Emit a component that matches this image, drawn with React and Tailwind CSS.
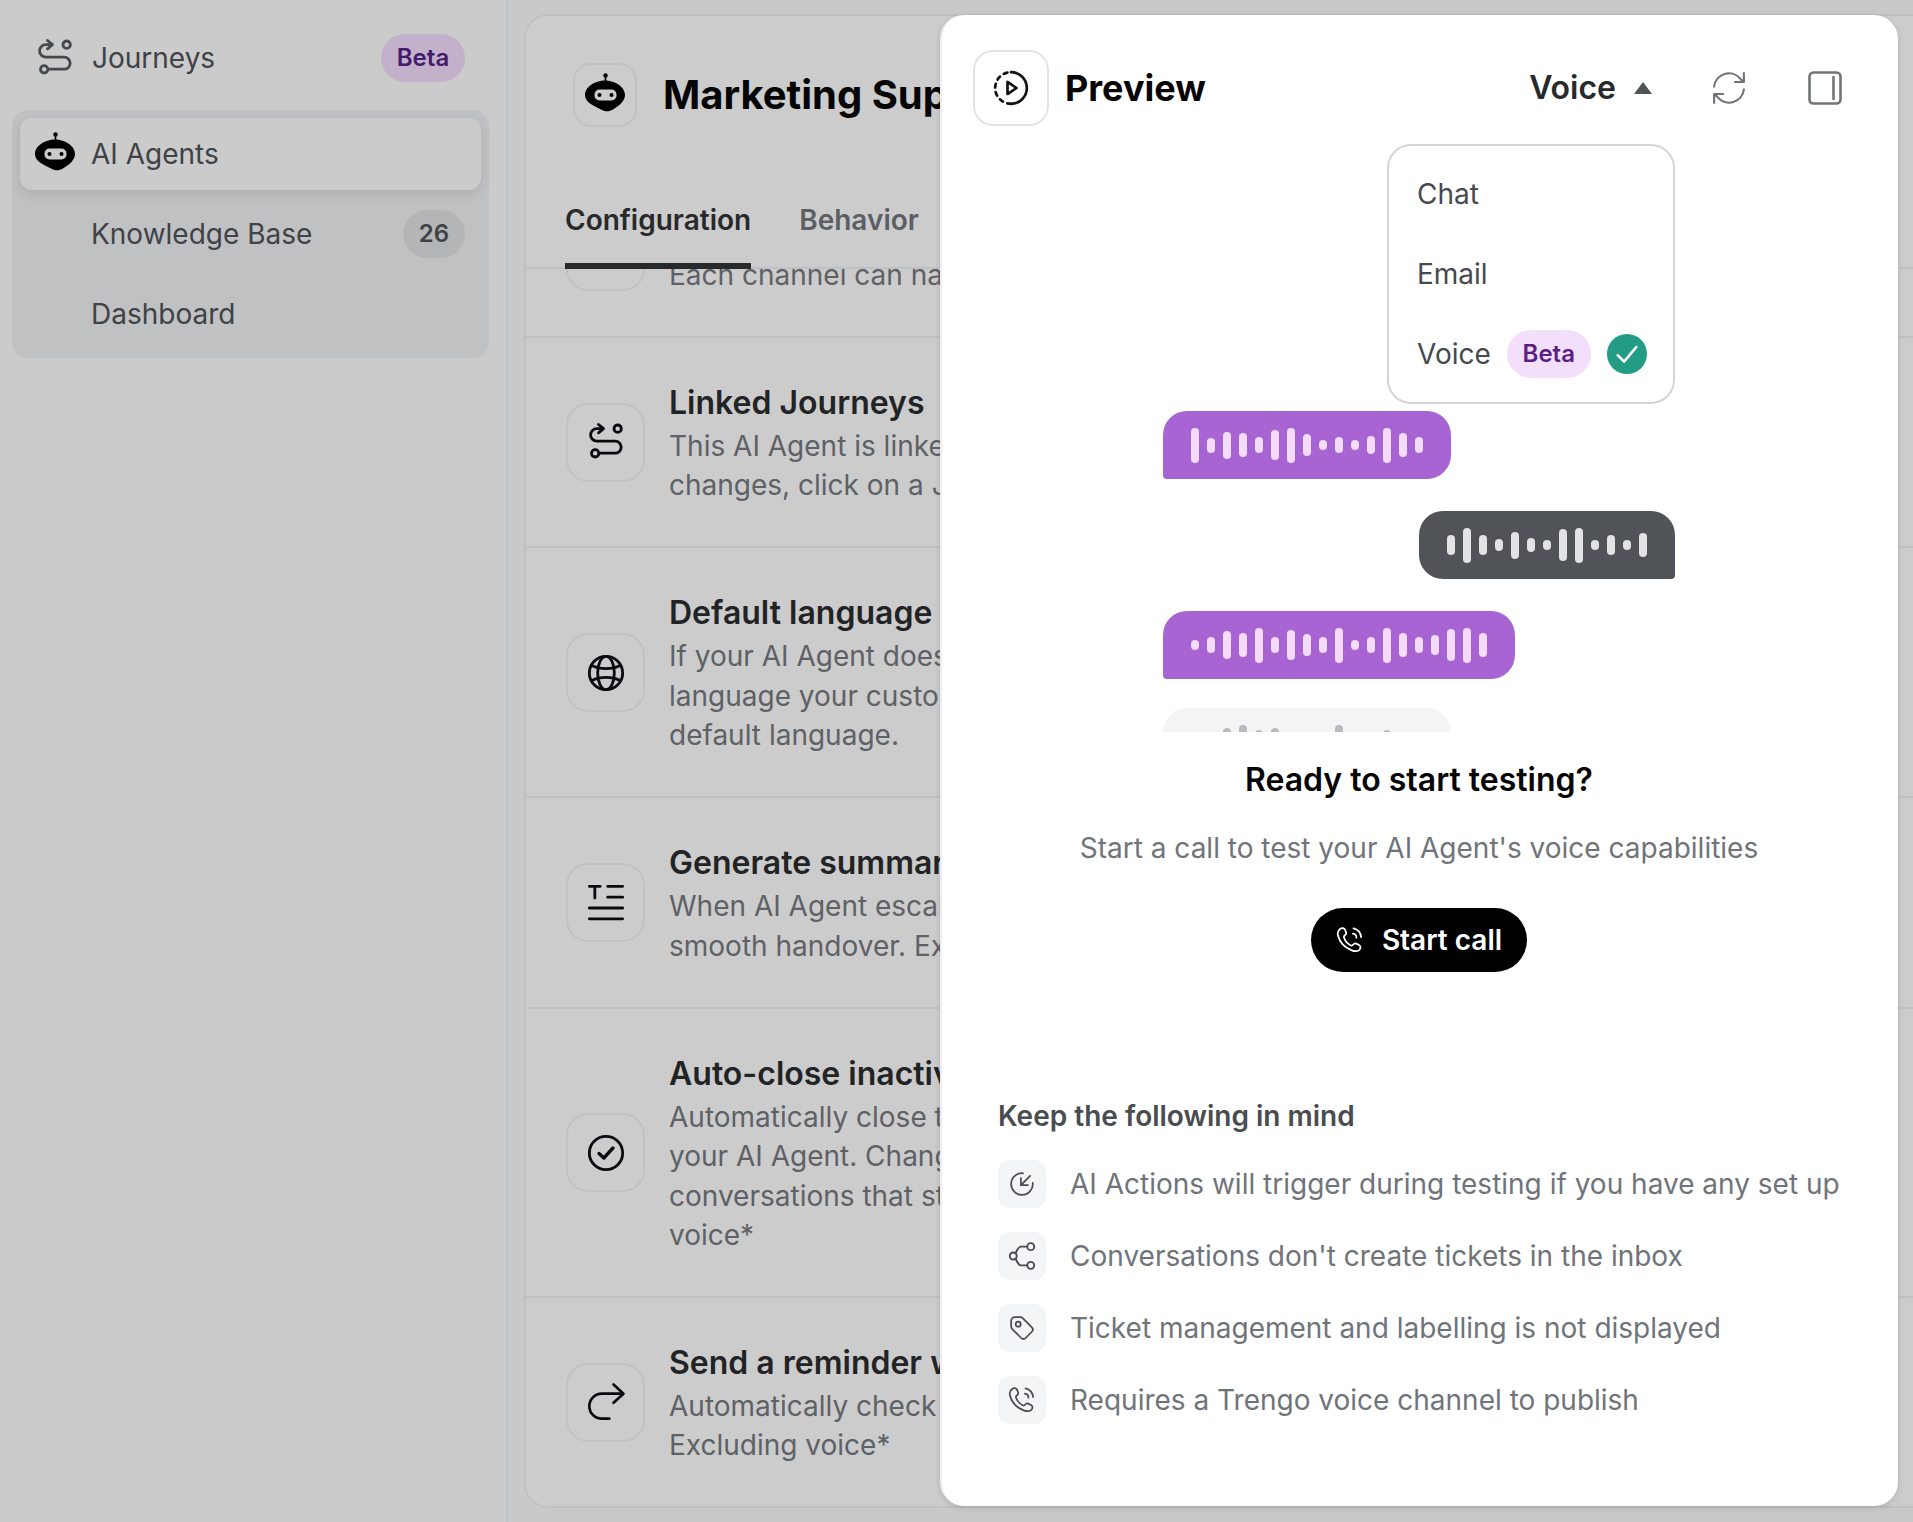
const font = { fontFamily: "Inter, 'Liberation Sans', sans-serif" };

const Robot = ({ className, eye = "#cccccc" }) => (
  <svg viewBox="0 0 40 40" className={className} fill="none">
    <circle cx="20.500" cy="2.500" r="2.200" fill="#000" />
    <path d="M20.500 4v5" stroke="#000" strokeWidth="1.600" />
    <path d="M20 7.500C30 7.500 40 14 40 22c0 6-6 11-12 14.500-4 2.300-8 2.500-12 0C10 33 0 30 0 22 0 14 10 7.500 20 7.500Z" fill="#000" />
    <rect x="9.500" y="16.500" width="22" height="11" rx="5" fill={eye} />
    <circle cx="14.500" cy="22" r="2" fill="#000" />
    <circle cx="26.500" cy="22" r="2" fill="#000" />
  </svg>
);

const Route = ({ className }) => (
  <svg viewBox="0 0 24 24" className={className} fill="none" stroke="currentColor" strokeWidth="1.700" strokeLinecap="round" strokeLinejoin="round">
    <path d="M7.500 1.500 10.500 4l-3 2.500" />
    <path d="M10 4H6.500a3.500 3.500 0 0 0 0 7.500h11a3.600 3.600 0 0 1 0 7.200H8.500" />
    <circle cx="19" cy="4" r="2.200" />
    <circle cx="5.500" cy="18.800" r="2.200" />
  </svg>
);

const Globe = ({ className }) => (
  <svg viewBox="0 0 24 24" className={className} fill="none" stroke="currentColor" strokeWidth="1.700">
    <circle cx="12" cy="12" r="10" />
    <ellipse cx="12" cy="12" rx="5" ry="10" />
    <path d="M3.500 7.500c5 2.500 12 2.500 17 0M3.500 16.500c5-2.500 12-2.500 17 0" />
  </svg>
);

const Summary = ({ className }) => (
  <svg viewBox="0 0 24 24" className={className} fill="none" stroke="currentColor" strokeWidth="1.700" strokeLinecap="round">
    <path d="M2 2h6.500M5.300 2v7M13 2h9M13 8.500h9M2 15h20M2 21.500h20" />
  </svg>
);

const CheckCircle = ({ className }) => (
  <svg viewBox="0 0 24 24" className={className} fill="none" stroke="currentColor" strokeWidth="1.700" strokeLinecap="round" strokeLinejoin="round">
    <circle cx="12" cy="12" r="10" />
    <path d="m7.800 12.300 2.900 2.700 5.500-6" strokeWidth="2" />
  </svg>
);

const Reply = ({ className }) => (
  <svg viewBox="0 0 24 24" className={className} fill="none" stroke="currentColor" strokeWidth="1.600" strokeLinecap="round" strokeLinejoin="round">
    <path d="M16.500 1.500 22.500 7l-6 5.500" />
    <path d="M22 7H9.500a7.500 7.500 0 0 0 0 15H14" />
  </svg>
);

const DashedPlay = ({ className }) => (
  <svg viewBox="0 0 24 24" className={className} fill="none" stroke="currentColor" strokeWidth="1.700" strokeLinecap="round" strokeLinejoin="round">
    <path d="M12 2a10 10 0 0 1 0 20" />
    <path d="M12 22a10 10 0 0 1-10-10A10 10 0 0 1 12 2" strokeDasharray="2.400 2.900" />
    <path d="M9.800 8.200v7.600l5.700-3.800Z" />
  </svg>
);

const Refresh = ({ className }) => (
  <svg viewBox="0 0 24 24" className={className} fill="none" stroke="currentColor" strokeWidth="1.500" strokeLinecap="round" strokeLinejoin="round">
    <path d="M1.500 11A10.500 10.500 0 0 1 20 5.500l2 2" />
    <path d="M22.500 1.500v6.300h-6.300" />
    <path d="M22.500 13A10.500 10.500 0 0 1 4 18.500l-2-2" />
    <path d="M1.500 22.500v-6.300h6.300" />
  </svg>
);

const PanelIcon = ({ className }) => (
  <svg viewBox="0 0 34 34" className={className} fill="none" stroke="currentColor" strokeWidth="2.600" strokeLinecap="round">
    <rect x="1.500" y="1.500" width="31" height="31" rx="4" />
    <path d="M25.500 6v22" />
  </svg>
);

const PhoneWaves = ({ className }) => (
  <svg viewBox="0 0 24 24" className={className} fill="none" stroke="currentColor" strokeWidth="1.500" strokeLinecap="round" strokeLinejoin="round">
    <path d="M3.500 2.500c1.700-1.200 3.600-.8 4.300.8l.9 2.300c.3 1-.2 1.800-1.100 2.400-.9.600-1 1.300-.6 2.300 1 2.700 3 5 5.400 6.200 1 .5 1.700.3 2.400-.6.700-.9 1.600-1.200 2.500-.8l2.400 1.200c1.500.8 1.700 2.800.3 4.100-1.500 1.400-4 1.500-6.500.5C7.500 18.500 3 13.500 1.700 8.200 1.100 5.800 1.900 3.600 3.500 2.500Z" />
    <path d="M14.500 6.500a3.500 3.500 0 0 1 3 3.500M15 2a8 8 0 0 1 6.500 7.500" />
  </svg>
);

const ActionArrow = ({ className }) => (
  <svg viewBox="0 0 24 24" className={className} fill="none" stroke="currentColor" strokeWidth="1.600" strokeLinecap="round" strokeLinejoin="round">
    <path d="M13 2.100A10 10 0 1 0 21.900 11" />
    <path d="M19.500 4.500l-8 8M11 6.500v6.500h6.500" />
  </svg>
);

const ShareNodes = ({ className }) => (
  <svg viewBox="0 0 24 24" className={className} fill="none" stroke="currentColor" strokeWidth="1.600" strokeLinecap="round" strokeLinejoin="round">
    <circle cx="4.500" cy="12" r="3" />
    <circle cx="19.500" cy="4" r="3" />
    <circle cx="19.500" cy="20" r="3" />
    <path d="M16.500 4H11C9 4 8 6.500 6.500 9.700M16.500 20H11c-2 0-3-2.500-4.500-5.700" />
  </svg>
);

const TagIcon = ({ className }) => (
  <svg viewBox="0 0 24 24" className={className} fill="none" stroke="currentColor" strokeWidth="1.600" strokeLinecap="round" strokeLinejoin="round">
    <path d="M2 5.500C2 3.500 3.500 2 5.500 2h4.800c1 0 1.900.4 2.600 1.100l8 8c1.300 1.300 1.300 3.300 0 4.600l-5.300 5.300c-1.300 1.300-3.300 1.300-4.600 0l-8-8C2.400 12.300 2 11.400 2 10.400Z" />
    <circle cx="8.500" cy="8.500" r="2.300" />
  </svg>
);

const Bars = ({ heights, color }) => (
  <div className="flex items-center gap-2 h-full">
    {heights.map((h, i) => (
      <span key={i} className={`w-2 rounded-full ${color}`} style={{ height: h }} />
    ))}
  </div>
);

const rows = [
  {
    title: "Linked Journeys",
    lines: ["This AI Agent is linked to the Journeys below. To make any", "changes, click on a Journey to open it."],
    icon: <Route className="w-10 h-10" />,
  },
  {
    title: "Default language",
    lines: ["If your AI Agent doesn't recognize a language, or if the", "language your customer uses isn't supported, it uses the", "default language."],
    icon: <Globe className="w-10 h-10" />,
  },
  {
    title: "Generate summary on handover",
    lines: ["When AI Agent escalates a conversation, it creates a", "smooth handover. Excluding voice*"],
    icon: <Summary className="w-10 h-10" />,
  },
  {
    title: "Auto-close inactive conversations",
    lines: ["Automatically close the conversations handled by", "your AI Agent. Changes only apply to new", "conversations that start after this change. Excluding", "voice*"],
    icon: <CheckCircle className="w-10 h-10" />,
  },
  {
    title: "Send a reminder when inactive",
    lines: ["Automatically check in with inactive customers.", "Excluding voice*"],
    icon: <Reply className="w-10 h-10" />,
  },
];

const notes = [
  { text: "AI Actions will trigger during testing if you have any set up", icon: <ActionArrow className="w-[26px] h-[26px]" /> },
  { text: "Conversations don't create tickets in the inbox", icon: <ShareNodes className="w-[28px] h-[28px]" /> },
  { text: "Ticket management and labelling is not displayed", icon: <TagIcon className="w-[26px] h-[26px]" /> },
  { text: "Requires a Trengo voice channel to publish", icon: <PhoneWaves className="w-[28px] h-[28px]" /> },
];

function Row({ title, lines, icon }) {
  return (
    <div className="flex items-center gap-[24px] pl-[40px] pt-[41px] pb-[40.400px] border-b-2 border-[#c0c1c3] whitespace-nowrap">
      <div className="w-[79px] h-[79px] shrink-0 rounded-[22px] border-2 border-[#c1c2c4] flex items-center justify-center text-[#0a0a10]">
        {icon}
      </div>
      <div>
        <div className="text-[32px] leading-[48px] font-semibold text-[#222325]">{title}</div>
        {lines.map((l) => (
          <div key={l} className="text-[28px] leading-[39.500px] text-[#5e6165]">{l}</div>
        ))}
      </div>
    </div>
  );
}

export default function App() {
  return (
    <div style={font} className="relative flex w-[1913px] h-[1522px] overflow-hidden bg-[#c8c9cb]">
      <aside className="w-[508px] shrink-0 h-full bg-[#cbcbcb] border-r-2 border-[#c1c2c4] pt-[22px] px-3">
        <div className="flex items-center h-[72px] w-[453px] pl-[23px]">
          <Route className="w-10 h-10 text-[#46494d]" />
          <span className="ml-[17px] text-[28px] text-[#3f4246]">Journeys</span>
          <span className="ml-auto h-12 w-[84px] rounded-full bg-[#c3b1cb] text-[#451a6b] text-[24px] font-semibold flex items-center justify-center">Beta</span>
        </div>
        <div className="mt-4 w-[477px] h-[248px] rounded-2xl bg-[#c0c1c3] p-2 flex flex-col gap-2">
          <div className="flex items-center h-[72px] shrink-0 rounded-xl bg-[#cbcbcb] shadow-[0_4px_12px_rgba(0,0,0,0.1)] pl-[15px]">
            <Robot className="w-10 h-10 -mt-1" eye="#cbcbcb" />
            <span className="ml-[16px] text-[28px] text-[#3f4246]">AI Agents</span>
          </div>
          <div className="flex items-center h-[72px] shrink-0 pl-[71px] pr-4">
            <span className="text-[28px] text-[#3f4246]">Knowledge Base</span>
            <span className="ml-auto h-12 w-[62px] rounded-full bg-[#b4b5b7] text-[#3f4246] text-[24px] font-semibold flex items-center justify-center">26</span>
          </div>
          <div className="flex items-center h-[72px] shrink-0 pl-[71px]">
            <span className="text-[28px] text-[#3f4246]">Dashboard</span>
          </div>
        </div>
      </aside>

      <main className="ml-4 mt-[14px] mb-[14px] flex-1 flex flex-col rounded-tl-[24px] rounded-bl-[24px] border-l-2 border-t-2 border-b-2 border-[#bfc0c2] bg-[#cccccc] overflow-hidden">
        <div className="flex items-center pl-[47px] pt-[47px] whitespace-nowrap">
          <div className="w-[64px] h-[64px] rounded-[18px] border-2 border-[#c1c2c4] flex items-center justify-center">
            <Robot className="w-10 h-10 -mt-1" />
          </div>
          <h1 className="ml-[26px] text-[40px] font-bold text-[#050506]">Marketing Support Agent</h1>
        </div>
        <div className="flex gap-12 pl-[39px] mt-[48px] h-[94px] border-b-2 border-[#c0c1c3]">
          <div className="text-[28px] font-semibold text-[#28292b] pt-[24px] h-[94px] border-b-[6px] border-[#28292b]">Configuration</div>
          <div className="text-[28px] font-semibold text-[#5c5f63] pt-[24px]">Behavior</div>
        </div>
        <div className="flex-1 overflow-hidden">
          <div className="-mt-[102px]">
            <Row title="Channels" lines={["Each channel can have its own AI Agent settings."]} icon={<Route className="w-10 h-10" />} />
            {rows.map((r) => (
              <Row key={r.title} {...r} />
            ))}
          </div>
        </div>
      </main>

      {/* preview drawer sits over the page */}
      <section className="absolute left-[940px] top-[15px] w-[958px] h-[1491px] rounded-[24px] bg-white border-l-2 border-[#eeeef2] shadow-[0_2px_6px_rgba(0,0,0,0.12)] flex flex-col">
        <header className="flex items-center pt-[35px] pl-[31px] pr-[56px]">
          <div className="w-[76px] h-[76px] rounded-[20px] border-2 border-[#e3e4e6] flex items-center justify-center">
            <DashedPlay className="w-[38px] h-[38px] text-[#111]" />
          </div>
          <span className="ml-[16px] text-[36px] font-bold text-[#050506]">Preview</span>
          <span className="ml-auto text-[32px] font-semibold text-[#28292b]">Voice</span>
          <svg viewBox="0 0 18 12" className="ml-[18px] w-[18px] h-3 text-[#505358]" fill="currentColor"><path d="M9 0l9 12H0Z" /></svg>
          <Refresh className="ml-[60px] w-[34px] h-[34px] text-[#70747a]" />
          <PanelIcon className="ml-[62px] w-[34px] h-[34px] text-[#70747a]" />
        </header>

        <div className="absolute left-[445px] top-[129px] w-[288px] h-[260px] rounded-[24px] border-2 border-[#d4d5d9] bg-white pl-[28px] flex flex-col justify-center z-10">
          <div className="h-20 flex items-center text-[28px] text-[#46494d]">Chat</div>
          <div className="h-20 flex items-center text-[28px] text-[#46494d]">Email</div>
          <div className="h-20 flex items-center text-[28px] text-[#46494d]">
            Voice
            <span className="ml-4 h-12 w-[84px] rounded-full bg-[#f3dffc] text-[#5a1f86] text-[24px] font-semibold flex items-center justify-center">Beta</span>
            <span className="ml-4 w-10 h-10 rounded-full bg-[#229c85] flex items-center justify-center">
              <svg viewBox="0 0 24 24" className="w-7 h-7" fill="none" stroke="#fff" strokeWidth="2.200" strokeLinecap="round" strokeLinejoin="round"><path d="m4 13 5.500 5.500L20 6" /></svg>
            </span>
          </div>
        </div>

        <div className="ml-[221px] mt-[285px] w-[512px] h-[321px] overflow-hidden flex flex-col gap-8 shrink-0">
          <div className="self-start h-[68px] shrink-0 px-7 bg-[#a964d3] rounded-[24px] rounded-bl-[4px]">
            <Bars color="bg-[#f3dcfe]" heights={[35, 15, 27, 24, 16, 30, 35, 22, 10, 16, 10, 18, 35, 24, 16]} />
          </div>
          <div className="self-end h-[68px] shrink-0 px-7 bg-[#505358] rounded-[24px] rounded-br-[4px]">
            <Bars color="bg-[#e1e2e4]" heights={[20, 35, 20, 12, 27, 14, 10, 32, 35, 10, 20, 10, 24]} />
          </div>
          <div className="self-start h-[68px] shrink-0 px-7 bg-[#a964d3] rounded-[24px] rounded-bl-[4px]">
            <Bars color="bg-[#f3dcfe]" heights={[10, 16, 28, 24, 35, 16, 30, 22, 16, 35, 10, 16, 35, 24, 16, 20, 32, 35, 24]} />
          </div>
          <div className="self-start h-[68px] shrink-0 -mt-[3px] px-7 bg-[#f4f4f4] rounded-[24px] rounded-bl-[4px]">
            <Bars color="bg-[#b7bac0]" heights={[10, 6, 28, 35, 24, 28, 10, 8, 6, 35, 8, 6, 24, 10, 6]} />
          </div>
        </div>

        <h2 className="mt-[28px] text-center text-[32px] leading-10 font-semibold text-[#050506] -ml-[2px]">Ready to start testing?</h2>
        <p className="mt-[28px] text-center text-[28px] leading-10 text-[#70747a] -ml-[2px]">Start a call to test your AI Agent's voice capabilities</p>
        <button className="mt-[40px] self-center -ml-[2px] h-16 w-[216px] rounded-full bg-black text-white flex items-center justify-center gap-[18px] text-[28px] font-semibold">
          <PhoneWaves className="w-[28px] h-[28px]" />
          Start call
        </button>

        <div className="mt-[124px] pl-[56px]">
          <div className="text-[28px] leading-10 font-semibold text-[#494c50]">Keep the following in mind</div>
          <div className="mt-6 flex flex-col gap-6">
            {notes.map((n) => (
              <div key={n.text} className="flex items-center gap-6">
                <span className="w-12 h-12 rounded-xl bg-[#f4f5f6] flex items-center justify-center text-[#494c50]">{n.icon}</span>
                <span className="text-[28px] text-[#70747a]">{n.text}</span>
              </div>
            ))}
          </div>
        </div>
      </section>
    </div>
  );
}
